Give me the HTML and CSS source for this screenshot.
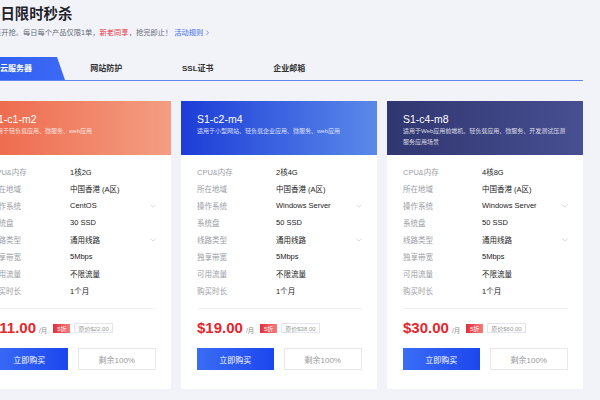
FILE: index.html
```html
<!DOCTYPE html>
<html lang="zh-CN">
<head>
<meta charset="utf-8">
<title>每日限时秒杀</title>
<link rel="stylesheet" href="styles.css">
</head>
<body>
<div class="page">
  <div class="intro">
    <h1 class="title">每日限时秒杀</h1>
    <p class="sub">10点开抢。每日每个产品仅限1单，<span class="hot">新老同享</span>，抢完即止！<a class="rule">活动规则<svg class="rule-arrow" viewBox="0 0 4 7"><path d="M0.6 0.6 L3.3 3.5 L0.6 6.4"/></svg></a></p>
  </div>

  <div class="tabs">
    <div class="tab active">云服务器</div>
    <div class="tab">网站防护</div>
    <div class="tab">SSL证书</div>
    <div class="tab">企业邮箱</div>
  </div>

  <div class="cards">
    <div class="card">
      <div class="card-head orange">
        <div class="card-title">S1-c1-m2</div>
        <div class="card-desc">适用于轻负载应用、微服务、web应用</div>
      </div>
      <div class="card-body">
        <ul class="specs">
          <li><span class="k">CPU&amp;内存</span><span class="v">1核2G</span></li>
          <li><span class="k">所在地域</span><span class="v">中国香港 (A区)</span></li>
          <li><span class="k">操作系统</span><span class="v">CentOS</span><svg class="caret" viewBox="0 0 6 4"><path d="M0.5 0.6 L3 3.2 L5.5 0.6"/></svg></li>
          <li><span class="k">系统盘</span><span class="v">30 SSD</span></li>
          <li><span class="k">线路类型</span><span class="v">通用线路</span><svg class="caret" viewBox="0 0 6 4"><path d="M0.5 0.6 L3 3.2 L5.5 0.6"/></svg></li>
          <li><span class="k">独享带宽</span><span class="v">5Mbps</span></li>
          <li><span class="k">可用流量</span><span class="v">不限流量</span></li>
          <li><span class="k">购买时长</span><span class="v">1个月</span></li>
        </ul>
        <div class="price-row">
          <span class="price">$11.00</span><span class="unit">/月</span>
          <span class="off">5折</span><span class="orig">原价$22.00</span>
        </div>
        <div class="btns">
          <a class="btn buy">立即购买</a><a class="btn left">剩余100%</a>
        </div>
      </div>
    </div>

    <div class="card">
      <div class="card-head blue">
        <div class="card-title">S1-c2-m4</div>
        <div class="card-desc">适用于小型网站、轻负载企业应用、微服务、web应用</div>
      </div>
      <div class="card-body">
        <ul class="specs">
          <li><span class="k">CPU&amp;内存</span><span class="v">2核4G</span></li>
          <li><span class="k">所在地域</span><span class="v">中国香港 (A区)</span></li>
          <li><span class="k">操作系统</span><span class="v">Windows Server</span><svg class="caret" viewBox="0 0 6 4"><path d="M0.5 0.6 L3 3.2 L5.5 0.6"/></svg></li>
          <li><span class="k">系统盘</span><span class="v">50 SSD</span></li>
          <li><span class="k">线路类型</span><span class="v">通用线路</span><svg class="caret" viewBox="0 0 6 4"><path d="M0.5 0.6 L3 3.2 L5.5 0.6"/></svg></li>
          <li><span class="k">独享带宽</span><span class="v">5Mbps</span></li>
          <li><span class="k">可用流量</span><span class="v">不限流量</span></li>
          <li><span class="k">购买时长</span><span class="v">1个月</span></li>
        </ul>
        <div class="price-row">
          <span class="price">$19.00</span><span class="unit">/月</span>
          <span class="off">5折</span><span class="orig">原价$38.00</span>
        </div>
        <div class="btns">
          <a class="btn buy">立即购买</a><a class="btn left">剩余100%</a>
        </div>
      </div>
    </div>

    <div class="card">
      <div class="card-head navy">
        <div class="card-title">S1-c4-m8</div>
        <div class="card-desc">适用于Web应用前端机、轻负载应用、微服务、开发测试压测服务应用场景</div>
      </div>
      <div class="card-body">
        <ul class="specs">
          <li><span class="k">CPU&amp;内存</span><span class="v">4核8G</span></li>
          <li><span class="k">所在地域</span><span class="v">中国香港 (A区)</span></li>
          <li><span class="k">操作系统</span><span class="v">Windows Server</span><svg class="caret" viewBox="0 0 6 4"><path d="M0.5 0.6 L3 3.2 L5.5 0.6"/></svg></li>
          <li><span class="k">系统盘</span><span class="v">50 SSD</span></li>
          <li><span class="k">线路类型</span><span class="v">通用线路</span><svg class="caret" viewBox="0 0 6 4"><path d="M0.5 0.6 L3 3.2 L5.5 0.6"/></svg></li>
          <li><span class="k">独享带宽</span><span class="v">5Mbps</span></li>
          <li><span class="k">可用流量</span><span class="v">不限流量</span></li>
          <li><span class="k">购买时长</span><span class="v">1个月</span></li>
        </ul>
        <div class="price-row">
          <span class="price">$30.00</span><span class="unit">/月</span>
          <span class="off">5折</span><span class="orig">原价$60.00</span>
        </div>
        <div class="btns">
          <a class="btn buy">立即购买</a><a class="btn left">剩余100%</a>
        </div>
      </div>
    </div>
  </div>
</div>
</body>
</html>
```

FILE: styles.css
```css
html, body {
  margin: 0;
  padding: 0;
}

body {
  width: 600px;
  height: 400px;
  overflow: hidden;
  background: #f1f3f9;
  font-family: "Liberation Sans", "Noto Sans CJK SC", sans-serif;
}

.page {
  width: 608px;
  margin-left: -25px;
}

.intro {
  padding: 4px 0 0 11px;
}

.title {
  margin: 0;
  font-size: 14.4px;
  line-height: 20px;
  font-weight: 700;
  color: #1f2329;
}

.sub {
  margin: 4px 0 0;
  font-size: 7.25px;
  line-height: 10px;
  color: #666a73;
}

.hot {
  color: #e8323c;
}

.rule {
  color: #3b6cf0;
  margin-left: 2px;
}

.rule-arrow {
  width: 3px;
  height: 5.5px;
  margin-left: 2.5px;
  vertical-align: -0.5px;
}

.rule-arrow path {
  fill: none;
  stroke: #3b6cf0;
  stroke-width: 0.9;
}

/* tabs */
.tabs {
  display: flex;
  height: 23px;
  margin-top: 19px;
  border-bottom: 1px solid #5f86f2;
}

.tab {
  width: 91.5px;
  flex: none;
  text-align: center;
  line-height: 23px;
  font-size: 8px;
  font-weight: 700;
  color: #333;
}

.tab.active {
  width: 90px;
  box-sizing: border-box;
  padding-right: 8px;
  margin-right: -4.5px;
  color: #fff;
  background: linear-gradient(90deg, #2e5df1, #3c69f4);
  clip-path: polygon(0 0, 82px 0, 100% 100%, 0 100%);
}

/* cards */
.cards {
  display: flex;
  gap: 10px;
  margin-top: 20px;
}

.card {
  width: 196px;
  flex: none;
  background: #fff;
}

.card-head {
  height: 54px;
  box-sizing: border-box;
  padding: 10.5px 15px 0 16px;
  color: #fff;
}

.orange {
  background: linear-gradient(90deg, #ee6548, #f39e82);
}

.blue {
  background: linear-gradient(90deg, #1d3dd7, #5a89e9);
}

.navy {
  background: linear-gradient(90deg, #30366f, #474f92);
}

.card-title {
  font-size: 10.5px;
  line-height: 14px;
}

.card-desc {
  font-size: 6px;
  line-height: 11px;
  color: rgba(255, 255, 255, 0.82);
}

.card-body {
  padding: 8px 15px 19px 16px;
}

.specs {
  list-style: none;
  margin: 0;
  padding: 0 0 8.5px;
  border-bottom: 1px solid #eef0f4;
}

.specs li {
  display: flex;
  align-items: center;
  height: 17px;
  font-size: 7.5px;
}

.k {
  width: 79px;
  flex: none;
  color: #9a9da5;
}

.v {
  flex: 1;
  color: #222;
}

.caret {
  width: 6px;
  height: 4px;
}

.caret path {
  fill: none;
  stroke: #c9cdd5;
  stroke-width: 0.8;
}

.price-row {
  display: flex;
  align-items: center;
  height: 20px;
  margin-top: 9.5px;
}

.price {
  font-size: 15px;
  line-height: 20px;
  font-weight: 700;
  color: #e5262d;
}

.unit {
  margin-left: 3px;
  padding-top: 4px;
  font-size: 6.5px;
  color: #888;
}

.off {
  margin-left: 6px;
  width: 17px;
  height: 9px;
  display: flex;
  align-items: center;
  justify-content: center;
  font-size: 6px;
  color: #fff;
  background: linear-gradient(90deg, #e32f39, #f47c7c);
}

.orig {
  margin-left: 4px;
  height: 10px;
  box-sizing: border-box;
  padding: 0 3px;
  display: flex;
  align-items: center;
  border: 1px solid #e3e5ea;
  font-size: 6px;
  color: #999;
}

.btns {
  display: flex;
  gap: 10px;
  margin-top: 10px;
}

.btn {
  flex: 1;
  height: 22px;
  box-sizing: border-box;
  display: flex;
  align-items: center;
  justify-content: center;
  font-size: 8px;
}

.buy {
  color: #fff;
  background: linear-gradient(90deg, #3a6df6, #1c46ee);
}

.left {
  color: #999;
  background: #fff;
  border: 1px solid #e6e8ec;
}
```
